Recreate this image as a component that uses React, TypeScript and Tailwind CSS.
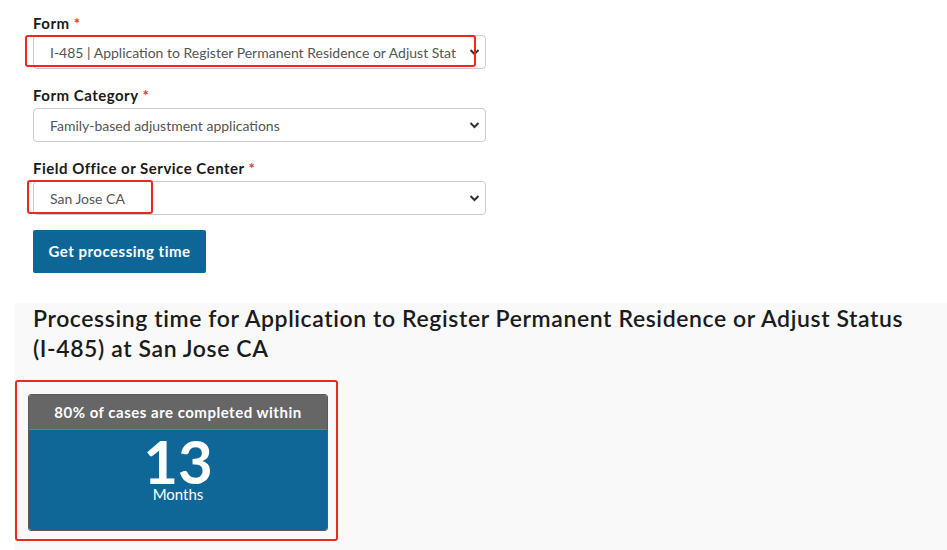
import React from "react";

const font = { fontFamily: "Lato, 'Open Sans', Arial, sans-serif" };

function Chevron() {
  return (
    <svg width="11" height="8" viewBox="0 0 11 8" className="absolute right-[5px] top-1/2 -translate-y-1/2">
      <path d="M1.5 2 L5.5 6 L9.5 2" fill="none" stroke="#333" strokeWidth="2" />
    </svg>
  );
}

function Select({ value }: { value: string }) {
  return (
    <div className="relative h-[34px] w-[453px] rounded-[4px] border border-[#cccccc] bg-white">
      <div className="flex h-full items-center pl-[16px] text-[14px] text-[#555555]">{value}</div>
      <Chevron />
    </div>
  );
}

function Label({ text }: { text: string }) {
  return (
    <div className="text-[15px] font-bold leading-[18px] tracking-[0.5px] text-[#1a1a1a]">
      {text} <span className="text-[#d9373c]">*</span>
    </div>
  );
}

export default function App() {
  return (
    <div className="relative h-[550px] w-[947px] overflow-hidden bg-white" style={font}>
      <div className="pl-[33px] pt-[14px]">
        <Label text="Form" />
        <div className="mt-[3px]">
          <Select value="I-485 | Application to Register Permanent Residence or Adjust Stat" />
        </div>
        <div className="mt-[17px]">
          <Label text="Form Category" />
        </div>
        <div className="mt-[4px]">
          <Select value="Family-based adjustment applications" />
        </div>
        <div className="mt-[17px]">
          <Label text="Field Office or Service Center" />
        </div>
        <div className="mt-[4px]">
          <Select value="San Jose CA" />
        </div>
        <button className="mt-[15px] flex h-[43px] w-[173px] items-center justify-center rounded-[2px] bg-[#0d6696] text-[15px] font-bold tracking-[0.5px] text-white">
          Get processing time
        </button>
      </div>

      <div className="ml-[14px] mt-[30px] h-[260px] bg-[#f9f9f9] pl-[19px]">
        <h2 className="text-[23px] font-semibold leading-[30px] tracking-[0.6px] text-[#1b1b1b]">
          Processing time for Application to Register Permanent Residence or Adjust Status
          <br />
          (I-485) at San Jose CA
        </h2>
        <div className="ml-[-5px] mt-[31px] w-[300px] overflow-hidden rounded-[3px] border border-[#5a5a5a]">
          <div className="flex h-[35px] items-center justify-center border-b border-[#7a7a7a] bg-[#666666] text-[15px] font-bold tracking-[0.5px] text-white">
            80% of cases are completed within
          </div>
          <div className="flex h-[100px] flex-col items-center bg-[#0e6796] pt-[9px] text-white">
            <div className="text-[60px] font-bold leading-[44px]">13</div>
            <div className="mt-[2px] text-[15px] leading-[18px]">Months</div>
          </div>
        </div>
      </div>

      {/* red annotation boxes */}
      <div className="absolute left-[25px] top-[35px] h-[32px] w-[451px] rounded-[3px] border-2 border-[#f0271d]" />
      <div className="absolute left-[27px] top-[180px] h-[34px] w-[126px] rounded-[3px] border-2 border-[#f0271d]" />
      <div className="absolute left-[15px] top-[380px] h-[161px] w-[323px] rounded-[3px] border-2 border-[#f0271d]" />
    </div>
  );
}
